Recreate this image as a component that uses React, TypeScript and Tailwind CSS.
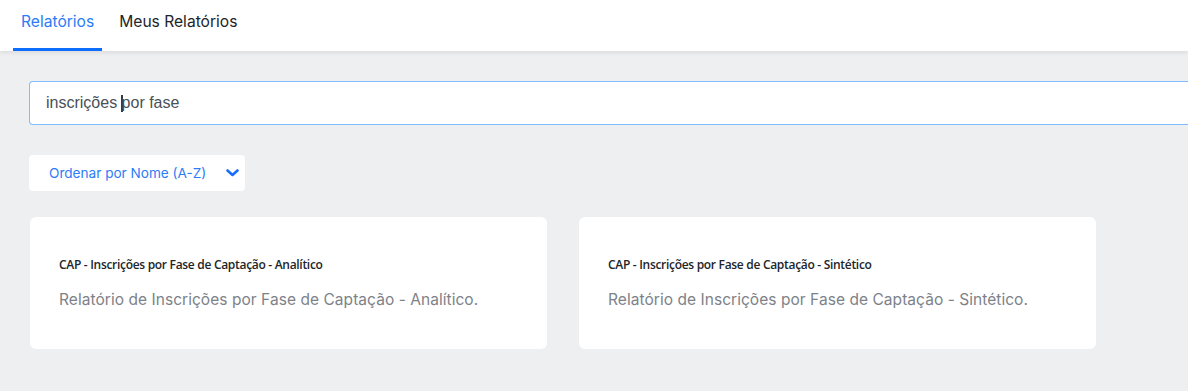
import { useState } from 'react'

const REPORTS = [
  {
    title: 'CAP - Inscrições por Fase de Captação - Analítico',
    desc: 'Relatório de Inscrições por Fase de Captação - Analítico.',
  },
  {
    title: 'CAP - Inscrições por Fase de Captação - Sintético',
    desc: 'Relatório de Inscrições por Fase de Captação - Sintético.',
  },
]

export default function App() {
  const [tab, setTab] = useState<'all' | 'mine'>('all')

  return (
    <main className="min-h-[391px] w-[1188px] overflow-hidden bg-[#eeeff1] font-['Inter',sans-serif]">
      {/* Tabs */}
      <div className="relative z-10 flex h-[51px] items-stretch bg-white px-[13px] shadow-[0_2px_4px_rgba(0,0,0,0.08)]">
        <button
          onClick={() => setTab('all')}
          className={`flex items-center border-b-[3px] px-[8px] pb-[5px] text-[15.6px] ${
            tab === 'all' ? 'border-[#0d6efd] text-[#2b7cf6]' : 'border-transparent text-[#212529]'
          }`}
        >
          Relatórios
        </button>
        <button
          onClick={() => setTab('mine')}
          className={`ml-[9px] flex items-center border-b-[3px] px-[8px] pb-[5px] text-[15.6px] ${
            tab === 'mine' ? 'border-[#0d6efd] text-[#2b7cf6]' : 'border-transparent text-[#212529]'
          }`}
        >
          Meus Relatórios
        </button>
      </div>

      <div className="pl-[29px] pt-[30px]">
        {/* Search */}
        <div className="flex h-[44px] items-center rounded-l-[4px] border border-r-0 border-[#80bdff] bg-white pl-[16px] font-['Liberation_Sans',sans-serif] text-[16px] text-[#495057]">
          <span className="whitespace-pre">inscrições </span>
          <span className="ml-[-1px] mr-[-1px] inline-block h-[17px] w-[2px] bg-[#343a40]" />
          <span>por fase</span>
        </div>

        {/* Sort */}
        <button className="mt-[30px] flex h-[36px] w-[216px] items-center justify-between rounded-[4px] bg-white pl-[20px] pr-[6px] text-[13.6px] text-[#2b7cf6]">
          Ordenar por Nome (A-Z)
          <svg width="13" height="8" viewBox="0 0 13 8" fill="none">
            <path d="M1.5 1.5l5 4.5 5-4.5" stroke="#1a6dff" strokeWidth="2.6" strokeLinecap="round" strokeLinejoin="round" />
          </svg>
        </button>

        {/* Cards */}
        <div className="mt-[26px] flex gap-[32px] pl-[1px]">
          {REPORTS.map(r => (
            <div key={r.title} className="flex h-[132px] w-[517px] flex-col justify-center rounded-[6px] bg-white pl-[29px] pt-[1px]">
              <p className="font-['Open_Sans',sans-serif] text-[12px] font-semibold tracking-[-0.3px] text-[#212529]">{r.title}</p>
              <p className="mt-[14px] text-[15.5px] tracking-[0.05px] text-[#7d8289]">{r.desc}</p>
            </div>
          ))}
        </div>
      </div>
    </main>
  )
}
